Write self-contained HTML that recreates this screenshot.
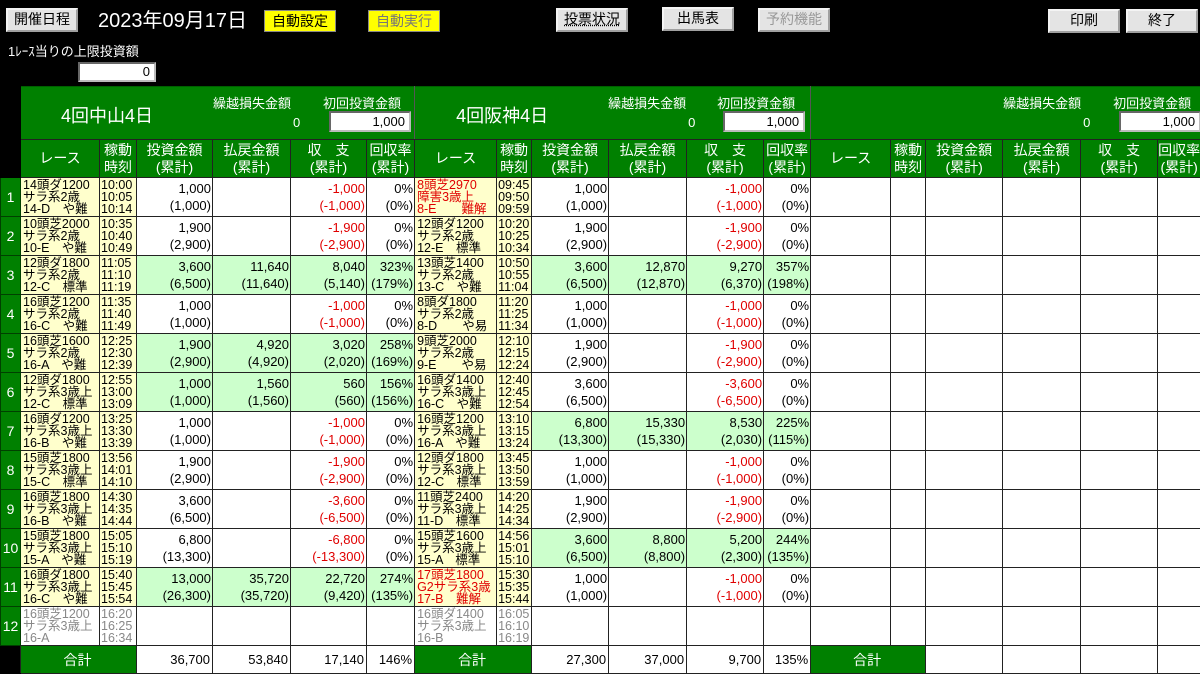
<!DOCTYPE html>
<html><head><meta charset="utf-8">
<style>
*{box-sizing:border-box;margin:0;padding:0}
body{width:1200px;height:673px;background:#000;overflow:hidden;position:relative;font-family:"Liberation Sans","Noto Sans CJK JP",sans-serif;color:#000}
.btn{position:absolute;background:#e4e4e4;border:2px outset #f4f4f4;font-size:14px;text-align:center;line-height:19px;height:24px}
.yb{position:absolute;background:#ffff00;font-size:14px;text-align:center;line-height:21px;height:22px;border:1px solid #888}
.w{position:absolute;color:#fff}
.inp{position:absolute;background:#fff;border:2px inset #bbb;font-size:13px;text-align:right;padding-right:4px;line-height:16px}
table{position:absolute;left:0;top:86px;border-collapse:collapse;table-layout:fixed;width:1200px}
td{border:1px solid #222;font-size:13px;overflow:hidden;white-space:nowrap;padding:0}
tr.d td{height:39px;background:#fff}
tr.d td.num{background:#008000;color:#fff;text-align:center;font-size:14px;border-color:#004000}
td.blk{background:#000;border-color:#000}
td.title{background:#008000;height:52px;color:#fff;border-color:#006000 #555 #222 #555;vertical-align:top}
td.h{background:#008000;color:#fff;text-align:center;font-size:14px;line-height:17px;height:38px;border-color:#222}
tr.d td.r{background:#ffffcc;font-size:12.5px;line-height:12px;padding-left:2px;vertical-align:top;padding-top:1px}
tr.d td.t{background:#ffffcc;font-size:12.5px;line-height:12px;padding-left:1px;vertical-align:top;padding-top:1px}
tr.d td.gr{background:#fff;color:#888}
tr.d td.a{text-align:right;line-height:17px;padding-right:1px}
tr.d td.g{background:#ccffcc}
.n{color:#e00000}
.red{color:#e00000}
tr.tot td{height:28px;background:#fff;text-align:right;padding-right:2px}
tr.tot td.blk{background:#000;border-color:#000 #222 #000 #000}
tr.tot td.tg{background:#008000;color:#fff;text-align:center;font-size:14px}
.tw{position:relative;height:52px}
.tw span{position:absolute;white-space:nowrap}
</style></head><body>
<div class="btn" style="left:6px;top:8px;width:72px">開催日程</div>
<div class="w" style="left:98px;top:8px;font-size:20px;line-height:26px">2023年09月17日</div>
<div class="yb" style="left:264px;top:10px;width:72px">自動設定</div>
<div class="yb" style="left:368px;top:10px;width:72px;color:#777">自動実行</div>
<div class="btn" style="left:556px;top:8px;width:72px;text-decoration:underline dotted">投票状況</div>
<div class="btn" style="left:662px;top:7px;width:72px">出馬表</div>
<div class="btn" style="left:758px;top:8px;width:72px;color:#999">予約機能</div>
<div class="btn" style="left:1048px;top:9px;width:72px">印刷</div>
<div class="btn" style="left:1126px;top:9px;width:72px">終了</div>
<div class="w" style="left:8px;top:41px;font-size:13px">1ﾚｰｽ当りの上限投資額</div>
<div class="inp" style="left:78px;top:62px;width:78px;height:20px">0</div>

<table>
<colgroup><col style="width:20px">
<col style="width:79px"><col style="width:37px"><col style="width:76px"><col style="width:78px"><col style="width:76px"><col style="width:48px">
<col style="width:82px"><col style="width:35px"><col style="width:77px"><col style="width:78px"><col style="width:77px"><col style="width:47px">
<col style="width:80px"><col style="width:35px"><col style="width:77px"><col style="width:78px"><col style="width:77px"><col style="width:43px">
</colgroup>
<tr><td class="blk" style="height:52px"></td>
<td class="title" colspan="6"><div class="tw"><span style="left:40px;top:15px;font-size:18px">4回中山4日</span><span style="left:192px;top:6px;font-size:13px">繰越損失金額</span><span style="left:302px;top:6px;font-size:13px">初回投資金額</span><span style="left:272px;top:28px;font-size:13px">0</span><span class="inp" style="left:308px;top:24px;width:82px;height:21px;color:#000;line-height:17px">1,000</span></div></td>
<td class="title" colspan="6"><div class="tw"><span style="left:41px;top:15px;font-size:18px">4回阪神4日</span><span style="left:193px;top:6px;font-size:13px">繰越損失金額</span><span style="left:302px;top:6px;font-size:13px">初回投資金額</span><span style="left:273px;top:28px;font-size:13px">0</span><span class="inp" style="left:308px;top:24px;width:82px;height:21px;color:#000;line-height:17px">1,000</span></div></td>
<td class="title" colspan="6"><div class="tw"><span style="left:192px;top:6px;font-size:13px">繰越損失金額</span><span style="left:302px;top:6px;font-size:13px">初回投資金額</span><span style="left:272px;top:28px;font-size:13px">0</span><span class="inp" style="left:308px;top:24px;width:82px;height:21px;color:#000;line-height:17px">1,000</span></div></td>
</tr>
<tr><td class="blk"></td>
<td class="h">レース</td><td class="h">稼動<br>時刻</td><td class="h">投資金額<br>(累計)</td><td class="h">払戻金額<br>(累計)</td><td class="h">収　支<br>(累計)</td><td class="h">回収率<br>(累計)</td>
<td class="h">レース</td><td class="h">稼動<br>時刻</td><td class="h">投資金額<br>(累計)</td><td class="h">払戻金額<br>(累計)</td><td class="h">収　支<br>(累計)</td><td class="h">回収率<br>(累計)</td>
<td class="h">レース</td><td class="h">稼動<br>時刻</td><td class="h">投資金額<br>(累計)</td><td class="h">払戻金額<br>(累計)</td><td class="h">収　支<br>(累計)</td><td class="h">回収率<br>(累計)</td>
</tr>

<tr class="d"><td class="num">1</td>
<td class="r">14頭ダ1200<br>サラ系2歳<br>14-D　や難</td><td class="t">10:00<br>10:05<br>10:14</td><td class="a">1,000<br>(1,000)</td><td class="a"></td><td class="a n">-1,000<br>(-1,000)</td><td class="a">0%<br>(0%)</td>
<td class="r red">8頭芝2970<br>障害3歳上<br>8-E　　難解</td><td class="t">09:45<br>09:50<br>09:59</td><td class="a">1,000<br>(1,000)</td><td class="a"></td><td class="a n">-1,000<br>(-1,000)</td><td class="a">0%<br>(0%)</td>
<td></td><td></td><td></td><td></td><td></td><td></td></tr>

<tr class="d"><td class="num">2</td>
<td class="r">10頭芝2000<br>サラ系2歳<br>10-E　や難</td><td class="t">10:35<br>10:40<br>10:49</td><td class="a">1,900<br>(2,900)</td><td class="a"></td><td class="a n">-1,900<br>(-2,900)</td><td class="a">0%<br>(0%)</td>
<td class="r">12頭ダ1200<br>サラ系2歳<br>12-E　標準</td><td class="t">10:20<br>10:25<br>10:34</td><td class="a">1,900<br>(2,900)</td><td class="a"></td><td class="a n">-1,900<br>(-2,900)</td><td class="a">0%<br>(0%)</td>
<td></td><td></td><td></td><td></td><td></td><td></td></tr>

<tr class="d"><td class="num">3</td>
<td class="r">12頭ダ1800<br>サラ系2歳<br>12-C　標準</td><td class="t">11:05<br>11:10<br>11:19</td><td class="a g">3,600<br>(6,500)</td><td class="a g">11,640<br>(11,640)</td><td class="a g">8,040<br>(5,140)</td><td class="a g">323%<br>(179%)</td>
<td class="r">13頭芝1400<br>サラ系2歳<br>13-C　や難</td><td class="t">10:50<br>10:55<br>11:04</td><td class="a g">3,600<br>(6,500)</td><td class="a g">12,870<br>(12,870)</td><td class="a g">9,270<br>(6,370)</td><td class="a g">357%<br>(198%)</td>
<td></td><td></td><td></td><td></td><td></td><td></td></tr>

<tr class="d"><td class="num">4</td>
<td class="r">16頭芝1200<br>サラ系2歳<br>16-C　や難</td><td class="t">11:35<br>11:40<br>11:49</td><td class="a">1,000<br>(1,000)</td><td class="a"></td><td class="a n">-1,000<br>(-1,000)</td><td class="a">0%<br>(0%)</td>
<td class="r">8頭ダ1800<br>サラ系2歳<br>8-D　　や易</td><td class="t">11:20<br>11:25<br>11:34</td><td class="a">1,000<br>(1,000)</td><td class="a"></td><td class="a n">-1,000<br>(-1,000)</td><td class="a">0%<br>(0%)</td>
<td></td><td></td><td></td><td></td><td></td><td></td></tr>

<tr class="d"><td class="num">5</td>
<td class="r">16頭芝1600<br>サラ系2歳<br>16-A　や難</td><td class="t">12:25<br>12:30<br>12:39</td><td class="a g">1,900<br>(2,900)</td><td class="a g">4,920<br>(4,920)</td><td class="a g">3,020<br>(2,020)</td><td class="a g">258%<br>(169%)</td>
<td class="r">9頭芝2000<br>サラ系2歳<br>9-E　　や易</td><td class="t">12:10<br>12:15<br>12:24</td><td class="a">1,900<br>(2,900)</td><td class="a"></td><td class="a n">-1,900<br>(-2,900)</td><td class="a">0%<br>(0%)</td>
<td></td><td></td><td></td><td></td><td></td><td></td></tr>

<tr class="d"><td class="num">6</td>
<td class="r">12頭ダ1800<br>サラ系3歳上<br>12-C　標準</td><td class="t">12:55<br>13:00<br>13:09</td><td class="a g">1,000<br>(1,000)</td><td class="a g">1,560<br>(1,560)</td><td class="a g">560<br>(560)</td><td class="a g">156%<br>(156%)</td>
<td class="r">16頭ダ1400<br>サラ系3歳上<br>16-C　や難</td><td class="t">12:40<br>12:45<br>12:54</td><td class="a">3,600<br>(6,500)</td><td class="a"></td><td class="a n">-3,600<br>(-6,500)</td><td class="a">0%<br>(0%)</td>
<td></td><td></td><td></td><td></td><td></td><td></td></tr>

<tr class="d"><td class="num">7</td>
<td class="r">16頭ダ1200<br>サラ系3歳上<br>16-B　や難</td><td class="t">13:25<br>13:30<br>13:39</td><td class="a">1,000<br>(1,000)</td><td class="a"></td><td class="a n">-1,000<br>(-1,000)</td><td class="a">0%<br>(0%)</td>
<td class="r">16頭芝1200<br>サラ系3歳上<br>16-A　や難</td><td class="t">13:10<br>13:15<br>13:24</td><td class="a g">6,800<br>(13,300)</td><td class="a g">15,330<br>(15,330)</td><td class="a g">8,530<br>(2,030)</td><td class="a g">225%<br>(115%)</td>
<td></td><td></td><td></td><td></td><td></td><td></td></tr>

<tr class="d"><td class="num">8</td>
<td class="r">15頭芝1800<br>サラ系3歳上<br>15-C　標準</td><td class="t">13:56<br>14:01<br>14:10</td><td class="a">1,900<br>(2,900)</td><td class="a"></td><td class="a n">-1,900<br>(-2,900)</td><td class="a">0%<br>(0%)</td>
<td class="r">12頭ダ1800<br>サラ系3歳上<br>12-C　標準</td><td class="t">13:45<br>13:50<br>13:59</td><td class="a">1,000<br>(1,000)</td><td class="a"></td><td class="a n">-1,000<br>(-1,000)</td><td class="a">0%<br>(0%)</td>
<td></td><td></td><td></td><td></td><td></td><td></td></tr>

<tr class="d"><td class="num">9</td>
<td class="r">16頭芝1800<br>サラ系3歳上<br>16-B　や難</td><td class="t">14:30<br>14:35<br>14:44</td><td class="a">3,600<br>(6,500)</td><td class="a"></td><td class="a n">-3,600<br>(-6,500)</td><td class="a">0%<br>(0%)</td>
<td class="r">11頭芝2400<br>サラ系3歳上<br>11-D　標準</td><td class="t">14:20<br>14:25<br>14:34</td><td class="a">1,900<br>(2,900)</td><td class="a"></td><td class="a n">-1,900<br>(-2,900)</td><td class="a">0%<br>(0%)</td>
<td></td><td></td><td></td><td></td><td></td><td></td></tr>

<tr class="d"><td class="num">10</td>
<td class="r">15頭芝1800<br>サラ系3歳上<br>15-A　や難</td><td class="t">15:05<br>15:10<br>15:19</td><td class="a">6,800<br>(13,300)</td><td class="a"></td><td class="a n">-6,800<br>(-13,300)</td><td class="a">0%<br>(0%)</td>
<td class="r">15頭芝1600<br>サラ系3歳上<br>15-A　標準</td><td class="t">14:56<br>15:01<br>15:10</td><td class="a g">3,600<br>(6,500)</td><td class="a g">8,800<br>(8,800)</td><td class="a g">5,200<br>(2,300)</td><td class="a g">244%<br>(135%)</td>
<td></td><td></td><td></td><td></td><td></td><td></td></tr>

<tr class="d"><td class="num">11</td>
<td class="r">16頭ダ1800<br>サラ系3歳上<br>16-C　や難</td><td class="t">15:40<br>15:45<br>15:54</td><td class="a g">13,000<br>(26,300)</td><td class="a g">35,720<br>(35,720)</td><td class="a g">22,720<br>(9,420)</td><td class="a g">274%<br>(135%)</td>
<td class="r red">17頭芝1800<br>G2サラ系3歳<br>17-B　難解</td><td class="t">15:30<br>15:35<br>15:44</td><td class="a">1,000<br>(1,000)</td><td class="a"></td><td class="a n">-1,000<br>(-1,000)</td><td class="a">0%<br>(0%)</td>
<td></td><td></td><td></td><td></td><td></td><td></td></tr>

<tr class="d"><td class="num">12</td>
<td class="r gr">16頭芝1200<br>サラ系3歳上<br>16-A</td><td class="t gr">16:20<br>16:25<br>16:34</td><td></td><td></td><td></td><td></td>
<td class="r gr">16頭ダ1400<br>サラ系3歳上<br>16-B</td><td class="t gr">16:05<br>16:10<br>16:19</td><td></td><td></td><td></td><td></td>
<td></td><td></td><td></td><td></td><td></td><td></td></tr>

<tr class="tot"><td class="blk"></td>
<td class="tg" colspan="2">合計</td><td>36,700</td><td>53,840</td><td>17,140</td><td>146%</td>
<td class="tg" colspan="2">合計</td><td>27,300</td><td>37,000</td><td>9,700</td><td>135%</td>
<td class="tg" colspan="2">合計</td><td></td><td></td><td></td><td></td></tr>
</table>
</body></html>
